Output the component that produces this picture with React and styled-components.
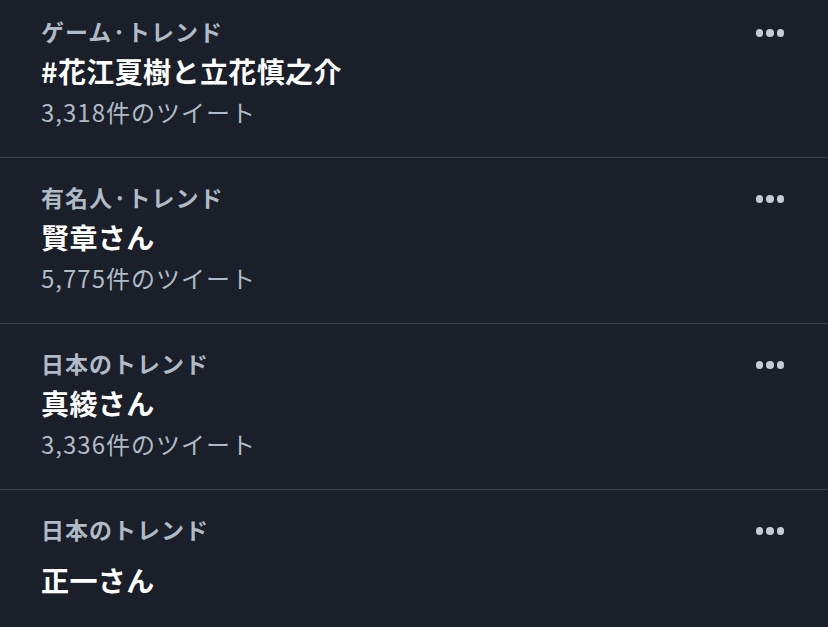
import React from "react";
import styled, { createGlobalStyle } from "styled-components";

const GlobalStyle = createGlobalStyle`
  html, body {
    margin: 0;
    padding: 0;
    background: #1a1f29;
  }
  body {
    font-family: "Noto Sans CJK JP", "Noto Sans", sans-serif;
    -webkit-font-smoothing: antialiased;
  }
`;

const trends = [
  { context: "ゲーム·トレンド", name: "#花江夏樹と立花慎之介", count: "3,318件のツイート" },
  { context: "有名人·トレンド", name: "賢章さん", count: "5,775件のツイート" },
  { context: "日本のトレンド", name: "真綾さん", count: "3,336件のツイート" },
  { context: "日本のトレンド", name: "正一さん" },
];

const List = styled.div`
  width: 828px;
  height: 627px;
  overflow: hidden;
  background: #1a1f29;
  margin-top: -8px;
`;

const Row = styled.div`
  display: flex;
  justify-content: space-between;
  align-items: flex-start;
  height: 166px;
  padding: 24px 44px 0 41px;
  box-sizing: border-box;
  border-bottom: 1px solid #3a414b;
`;

const Info = styled.div`
  display: flex;
  flex-direction: column;
`;

const Context = styled.div`
  font-size: 23px;
  font-weight: 700;
  line-height: 30px;
  letter-spacing: 1px;
  color: #afbac5;
`;

const Name = styled.div`
  font-size: 28px;
  font-weight: 700;
  line-height: 36px;
  letter-spacing: 0.4px;
  color: #ffffff;
  margin-top: ${(p) => (p.$alone ? "18px" : "7px")};
`;

const Count = styled.div`
  font-size: 24px;
  font-weight: 400;
  line-height: 30px;
  letter-spacing: 1px;
  color: #afbac5;
  margin-top: 8px;
`;

const More = styled.div`
  display: flex;
  gap: 3px;
  margin-top: 13px;
`;

const Dot = styled.span`
  width: 7.5px;
  height: 7.5px;
  border-radius: 50%;
  background: #c3cbd5;
`;

export default function App() {
  return (
    <>
      <GlobalStyle />
      <List>
        {trends.map((t, i) => (
          <Row key={i}>
            <Info>
              <Context>{t.context}</Context>
              <Name $alone={!t.count}>{t.name}</Name>
              {t.count && <Count>{t.count}</Count>}
            </Info>
            <More>
              <Dot />
              <Dot />
              <Dot />
            </More>
          </Row>
        ))}
      </List>
    </>
  );
}
